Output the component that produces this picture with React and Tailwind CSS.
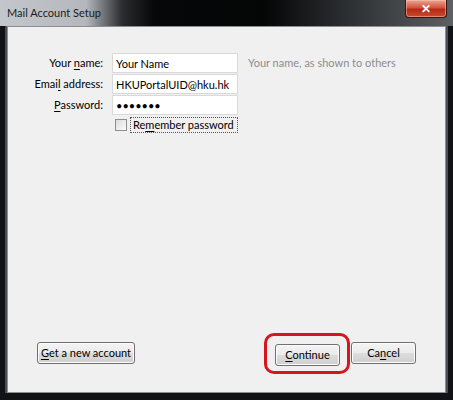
import { useState } from 'react';

const font = { fontFamily: 'Lato, "Noto Sans", sans-serif' };

function Key({ children }) {
  return <span className="underline underline-offset-2">{children}</span>;
}

function WinButton({ children, className = '' }) {
  return (
    <button
      className={`h-[22px] whitespace-nowrap rounded-[3px] border border-[#707070] bg-[linear-gradient(#f4f4f4,#ebebeb_50%,#dddddd_50%,#cfcfcf)] text-[11px] text-black shadow-[inset_0_0_0_1px_#fcfcfc] ${className}`}
      style={font}
    >
      <span>{children}</span>
    </button>
  );
}

function TextField({ value, type = 'text' }) {
  return (
    <input
      type={type}
      defaultValue={value}
      className="h-[20px] w-full border border-[#d9d9d9] bg-white px-[3px] text-[11px] text-black outline-none"
      style={font}
    />
  );
}

export default function App() {
  const [remember, setRemember] = useState(false);

  return (
    <div className="flex h-[400px] w-[453px] flex-col bg-[#101215]" style={font}>
      {/* Title bar */}
      <div className="flex h-[26px] shrink-0 items-start bg-[linear-gradient(90deg,#c3c7cb_0%,#b4b8bc_19%,#2a2c2f_27%,#060708_34%,#040505_58%,#2f3235_78%,#5d6063_100%)]">
        <span className="mt-[5px] whitespace-nowrap pl-[7px] text-[11px] leading-[16px] text-[#1b1b1b]">
          Mail Account Setup
        </span>
        <button className="ml-auto mr-[6px] flex h-[18px] w-[42px] items-center justify-center rounded-b-[4px] border border-t-0 border-[#3a1410] bg-[linear-gradient(#e9a796,#d4533a_45%,#b52a14_55%,#c94a2f)] text-[12px] font-bold leading-none text-white shadow-[inset_0_0_0_1px_rgba(255,200,180,0.5)]">
          ✕
        </button>
      </div>

      {/* Frame + content */}
      <div className="mx-[5px] flex flex-1 flex-col border-x-2 border-[#4a4e52] bg-[#f0f0f0]">
        <div className="flex flex-1 flex-col border border-[#8b8f93]">
          <div className="grid grid-cols-[95px_126px_1fr] gap-x-[9px] gap-y-[1px] pt-[26px] text-[11px] text-black">
            <div className="flex h-[20px] items-center justify-end whitespace-nowrap">
              <span>
                Your <Key>n</Key>ame:
              </span>
            </div>
            <TextField value="Your Name" />
            <div className="flex h-[20px] items-center whitespace-nowrap pl-px text-[#8d8d8d]">
              <span>Your name, as shown to others</span>
            </div>

            <div className="flex h-[20px] items-center justify-end whitespace-nowrap">
              <span>
                Emai<Key>l</Key> address:
              </span>
            </div>
            <TextField value="HKUPortalUID@hku.hk" />
            <span />

            <div className="flex h-[20px] items-center justify-end whitespace-nowrap">
              <span>
                <Key>P</Key>assword:
              </span>
            </div>
            <TextField value="1234567" type="password" />
            <span />

            <span />
            <label className="mt-[1px] flex h-[16px] items-center whitespace-nowrap">
              <input
                type="checkbox"
                checked={remember}
                onChange={() => setRemember(!remember)}
                className="ml-[3px] h-[12px] w-[12px] shrink-0 appearance-none border border-[#8e8f8f] bg-[linear-gradient(135deg,#dcdcdc,#fbfbfb)]"
              />
              <span className="ml-[3px] flex h-[16px] w-[108px] items-center border border-dotted border-[#555] pl-[2px]">
                <span>
                  Re<Key>m</Key>ember password
                </span>
              </span>
            </label>
            <span />
          </div>

          <div className="mt-auto flex items-center px-[29px] pb-[18px]">
            <WinButton className="w-[98px]">
              <Key>G</Key>et a new account
            </WinButton>
            <div className="ml-auto rounded-[10px] border-[3px] border-[#d8141d] pb-[5px] pl-[8px] pr-[7px] pt-[5px]">
              <WinButton className="w-[65px]">
                <Key>C</Key>ontinue
              </WinButton>
            </div>
            <WinButton className="ml-[1px] w-[65px]">
              Ca<Key>n</Key>cel
            </WinButton>
          </div>
        </div>
      </div>
      <div className="h-[7px] shrink-0" />
    </div>
  );
}
